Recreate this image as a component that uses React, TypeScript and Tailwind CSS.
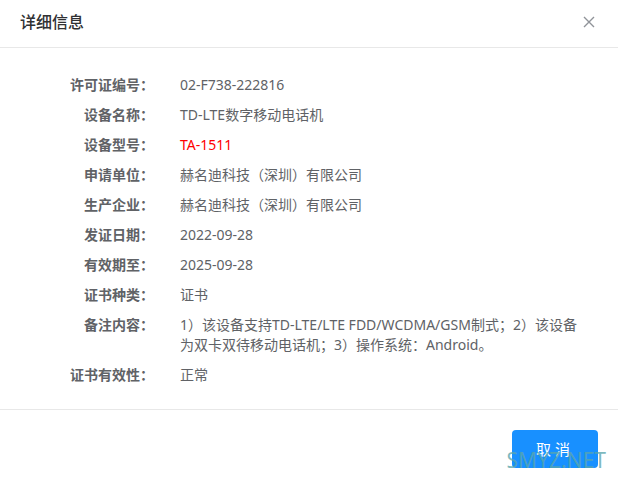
import React from 'react';

const rows: { label: string; value: string; red?: boolean }[] = [
  { label: '许可证编号：', value: '02-F738-222816' },
  { label: '设备名称：', value: 'TD-LTE数字移动电话机' },
  { label: '设备型号：', value: 'TA-1511', red: true },
  { label: '申请单位：', value: '赫名迪科技（深圳）有限公司' },
  { label: '生产企业：', value: '赫名迪科技（深圳）有限公司' },
  { label: '发证日期：', value: '2022-09-28' },
  { label: '有效期至：', value: '2025-09-28' },
  { label: '证书种类：', value: '证书' },
  {
    label: '备注内容：',
    value: '1）该设备支持TD-LTE/LTE FDD/WCDMA/GSM制式；2）该设备为双卡双待移动电话机；3）操作系统：Android。',
  },
  { label: '证书有效性：', value: '正常' },
];

const App: React.FC = () => {
  return (
    <div
      className="relative flex h-[477px] w-full flex-col bg-white text-[14px] text-[#606266]"
      style={{ fontFamily: '"Noto Sans", "Noto Sans CJK SC", sans-serif' }}
    >
      <div className="flex items-center justify-between border-b border-[#e8e8e8] px-5 pt-[11px] pb-[14px]">
        <h2 className="text-[16px] leading-[22px] font-medium text-[#303133]">详细信息</h2>
        <button className="mr-[3px] text-[#909399]">
          <svg width="12" height="12" viewBox="0 0 12 12" fill="none" stroke="currentColor" strokeWidth="1.4">
            <path d="M1 1l10 10M11 1L1 11" />
          </svg>
        </button>
      </div>

      <div className="flex-1 pt-[27px] pr-[32px] pl-5">
        {rows.map((row) => (
          <div key={row.label} className="mb-[10px] flex leading-[20px]">
            <div className="w-[134px] shrink-0 text-right font-bold">{row.label}</div>
            <div className={`flex-1 pl-[26px] ${row.red ? 'text-[#f00]' : ''}`}>{row.value}</div>
          </div>
        ))}
      </div>

      <div className="flex justify-end border-t border-[#e8e8e8] px-5 pt-[20px] pb-[9px]">
        <button className="h-[38px] w-[86px] rounded-[4px] bg-[#1890ff] text-[15px] tracking-[4px] text-white">
          取消
        </button>
      </div>

      <div className="pointer-events-none absolute right-[12px] bottom-[6px] text-[21px] leading-none text-[#5aa6ad]/80">
        SMYZ.NET
      </div>
    </div>
  );
};

export default App;
